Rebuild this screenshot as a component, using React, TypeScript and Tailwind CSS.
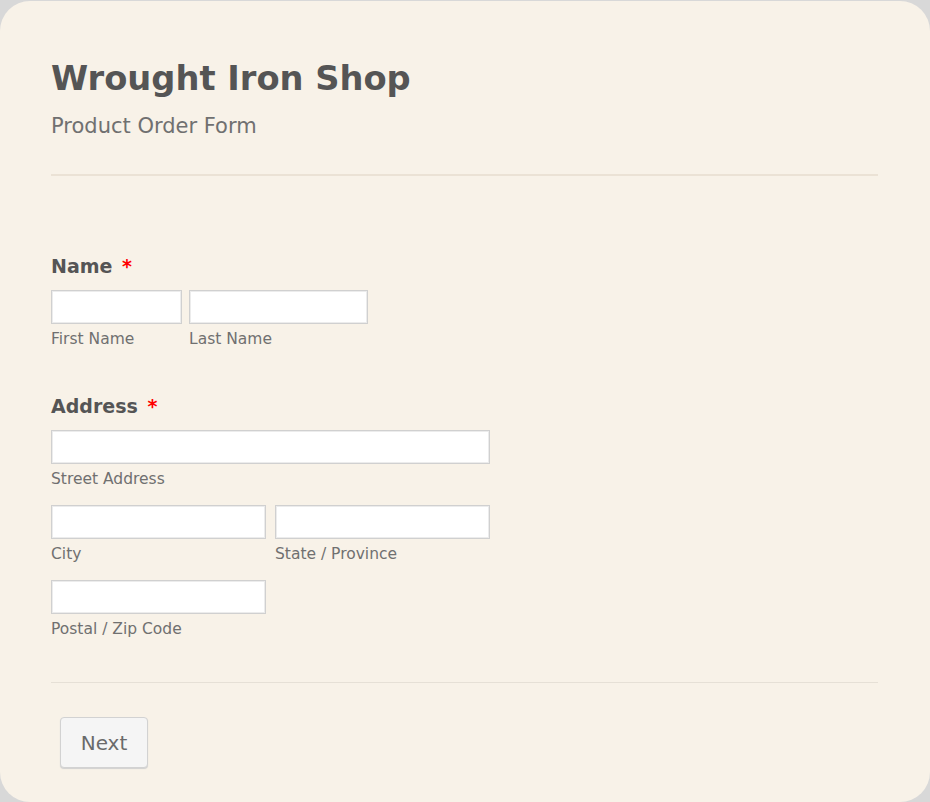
const labelFont = { fontFamily: '"DejaVu Sans", Verdana, sans-serif' }

function Field({ label, width }: { label: string; width: string }) {
  return (
    <div className="flex flex-col">
      <input
        type="text"
        className={`${width} h-[34px] bg-white border border-[#d0d0d0] shadow-[inset_0_0_0_1px_#ececec] outline-none`}
      />
      <span className="mt-[6px] text-[15.5px] leading-[18px] text-[#707070]">{label}</span>
    </div>
  )
}

export default function App() {
  return (
    <div
      className="min-h-[802px] w-[930px] bg-[#d8d8d8] pt-px overflow-hidden"
      style={labelFont}
    >
      <div className="h-[801px] w-full rounded-[30px] bg-[#f8f2e8] pl-[51px] pr-[52px] pt-[58px]">
        <h1 className="text-[33.7px] leading-[40px] font-bold text-[#555555]">Wrought Iron Shop</h1>
        <p className="mt-[15px] text-[21px] leading-[24px] text-[#707070]">Product Order Form</p>
        <div className="mt-[36px] h-[2px] bg-[#ebe2d5]" />

        <div className="mt-[78px]">
          <div className="text-[19px] leading-[24px] font-bold text-[#555555]">
            Name <span className="ml-[3px] text-[#ff0000]">*</span>
          </div>
          <div className="mt-[12px] flex gap-[7px]">
            <Field label="First Name" width="w-[131px]" />
            <Field label="Last Name" width="w-[179px]" />
          </div>
        </div>

        <div className="mt-[46px]">
          <div className="text-[19px] leading-[24px] font-bold text-[#555555]">
            Address <span className="ml-[3px] text-[#ff0000]">*</span>
          </div>
          <div className="mt-[12px] flex flex-col gap-[17px]">
            <Field label="Street Address" width="w-[439px]" />
            <div className="flex gap-[9px]">
              <Field label="City" width="w-[215px]" />
              <Field label="State / Province" width="w-[215px]" />
            </div>
            <Field label="Postal / Zip Code" width="w-[215px]" />
          </div>
        </div>

        <div className="mt-[44px] h-px bg-[#e6e0d6]" />

        <button className="ml-[9px] mt-[34px] h-[51px] w-[88px] rounded-[4px] border border-[#d2d2d2] bg-[#f5f5f5] text-[20px] text-[#6a6a6a] shadow-[0_1px_1px_#d0d0d0]">
          Next
        </button>
      </div>
    </div>
  )
}
